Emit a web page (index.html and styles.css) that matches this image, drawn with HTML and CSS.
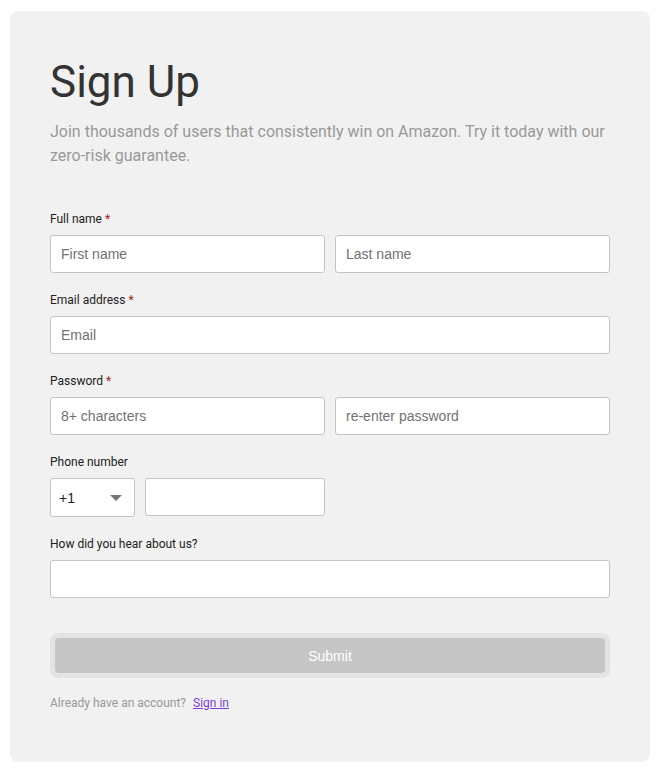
FILE: index.html
```html
<!DOCTYPE html>
<html lang="en">
<head>
<meta charset="utf-8">
<title>Sign Up</title>
<link rel="stylesheet" href="styles.css">
</head>
<body>
<div class="card">
  <h1 class="title">Sign Up</h1>
  <p class="subtitle">Join thousands of users that consistently win on Amazon. Try it today with our zero-risk guarantee.</p>
  <form class="form">
    <div class="field">
      <label class="label">Full name <span class="req">*</span></label>
      <div class="row two">
        <input class="input" type="text" placeholder="First name">
        <input class="input" type="text" placeholder="Last name">
      </div>
    </div>
    <div class="field">
      <label class="label">Email address <span class="req">*</span></label>
      <input class="input" type="text" placeholder="Email">
    </div>
    <div class="field">
      <label class="label">Password <span class="req">*</span></label>
      <div class="row two">
        <input class="input" type="password" placeholder="8+ characters">
        <input class="input" type="password" placeholder="re-enter password">
      </div>
    </div>
    <div class="field">
      <label class="label">Phone number</label>
      <div class="row phone">
        <div class="select"><span>+1</span><span class="caret"></span></div>
        <input class="input tel" type="text">
      </div>
    </div>
    <div class="field">
      <label class="label">How did you hear about us?</label>
      <input class="input" type="text">
    </div>
    <div class="submit-wrap">
      <button class="submit" type="button">Submit</button>
    </div>
    <p class="footer">Already have an account? <a class="link" href="#">Sign in</a></p>
  </form>
</div>
</body>
</html>
```
FILE: styles.css
```css
* { box-sizing: border-box; }
html, body { margin: 0; padding: 0; background: #fff; }
body { padding: 11px 10px 10px 10px; font-family: Roboto, "Liberation Sans", sans-serif; }
.card {
  width: 640px;
  height: 751px;
  background: #f1f1f1;
  border-radius: 8px;
  padding: 45px 40px 40px 40px;
}
.title {
  margin: 0;
  font-size: 44px;
  font-weight: 400;
  color: #333;
  line-height: 52px;
}
.subtitle {
  margin: 12px 0 0 0;
  font-size: 16px;
  line-height: 24px;
  color: #999;
}
.form { margin-top: 43px; }
.field { margin-bottom: 19px; }
.label {
  display: block;
  font-size: 12px;
  line-height: 16px;
  color: #222;
  margin-bottom: 8px;
}
.req { color: #a02020; }
.row { display: flex; gap: 10px; }
.row.two .input { flex: 1; min-width: 0; }
.input {
  display: block;
  width: 100%;
  height: 38px;
  border: 1px solid #c4c4c4;
  border-radius: 3px;
  background: #fff;
  padding: 0 10px;
  font-family: "Liberation Sans", Arial, sans-serif;
  font-size: 14px;
  color: #333;
  outline: none;
}
.input::placeholder { color: #727272; }
.select {
  width: 85px;
  height: 39px;
  border: 1px solid #c4c4c4;
  border-radius: 3px;
  background: #fff;
  display: flex;
  align-items: center;
  justify-content: space-between;
  padding: 0 12px 0 8px;
  font-family: "Liberation Sans", Arial, sans-serif;
  font-size: 14px;
  color: #222;
}
.caret {
  width: 0; height: 0;
  border-left: 6px solid transparent;
  border-right: 6px solid transparent;
  border-top: 6px solid #777;
}
.input.tel { width: 180px; flex: none; }
.submit-wrap {
  margin-top: 35px;
  border: 5px solid #e3e3e3;
  border-radius: 8px;
  background: #e3e3e3;
}
.submit {
  display: block;
  width: 100%;
  height: 35px;
  border: none;
  border-radius: 4px;
  background: #c6c6c6;
  color: #fff;
  font-family: "Liberation Sans", Arial, sans-serif;
  font-size: 14px;
}
.footer {
  margin: 18px 0 0 0;
  font-size: 12px;
  color: #999;
}
.link { color: #7b3fe4; margin-left: 4px; }
```
